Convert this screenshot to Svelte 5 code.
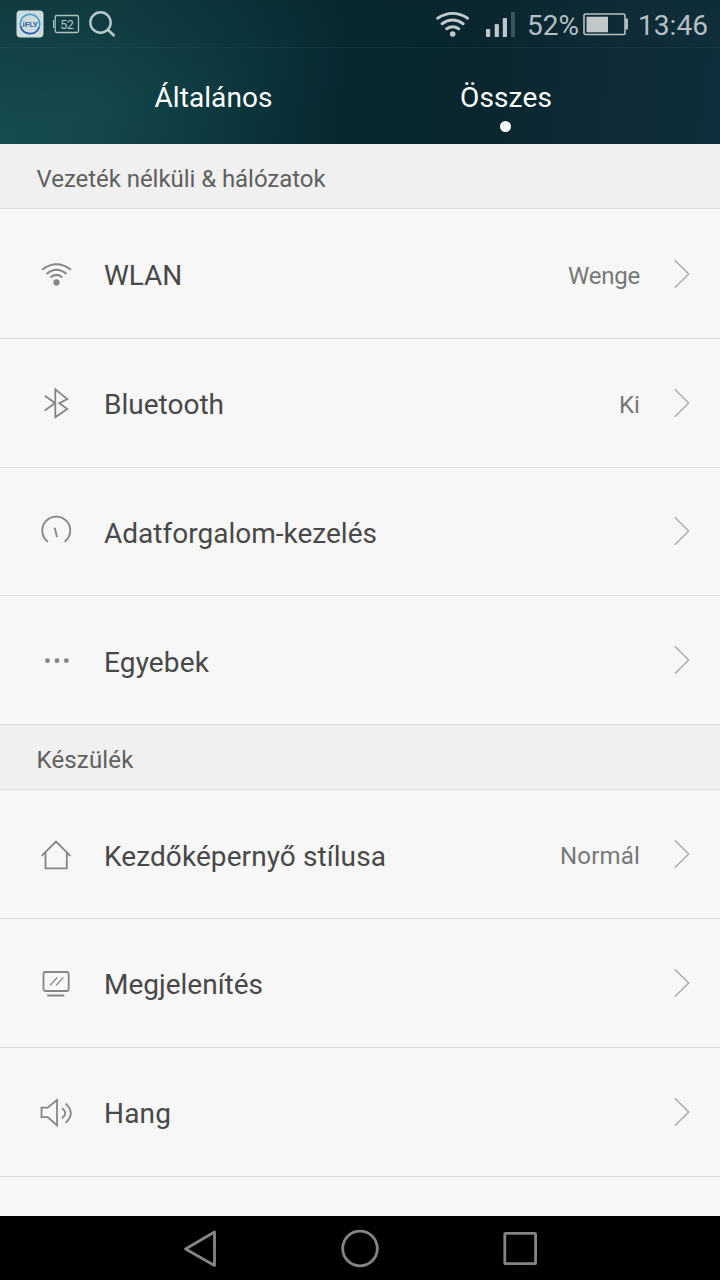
<script>
  const sections = [
    {
      title: 'Vezeték nélküli & hálózatok', width: 289,
      rows: [
        { icon: 'wifi', label: 'WLAN', width: 78, value: 'Wenge', valueWidth: 72 },
        { icon: 'bluetooth', label: 'Bluetooth', width: 120, value: 'Ki', valueWidth: 21 },
        { icon: 'gauge', label: 'Adatforgalom-kezelés', width: 273 },
        { icon: 'dots', label: 'Egyebek', width: 105 }
      ]
    },
    {
      title: 'Készülék', width: 97,
      rows: [
        { icon: 'home', label: 'Kezdőképernyő stílusa', width: 282, value: 'Normál', valueWidth: 80 },
        { icon: 'display', label: 'Megjelenítés', width: 159 },
        { icon: 'sound', label: 'Hang', width: 67 }
      ]
    }
  ];

  // Spreads the letters so that a label takes up the given width.
  function fit(node, width) {
    const spacing = (width - node.getBoundingClientRect().width) / node.textContent.length;
    node.style.letterSpacing = `${spacing}px`;
  }
</script>

<div class="screen">
  <header>
    <div class="status">
      <svg class="left" width="130" height="48" viewBox="0 0 130 48" fill="none">
        <rect x="16.5" y="10.5" width="27" height="27" rx="4" fill="#cfdcdf" />
        <circle cx="30" cy="24" r="9.8" stroke="#3c9fc8" stroke-width="1.5" />
        <path d="M20.5 26a9.8 9.8 0 0 0 18.6 1.5" stroke="#3157a9" stroke-width="1.5" />
        <text x="22.5" y="26.5" font-size="6.6" font-weight="700" textLength="15.5" lengthAdjust="spacingAndGlyphs" fill="#3b6aa5">iFLY</text>
        <rect x="55.2" y="15.5" width="23.3" height="17" rx="1.5" stroke="#aec2c4" stroke-width="1.3" />
        <path d="M53.5 20v8" stroke="#aec2c4" />
        <text x="60.3" y="29" font-size="12.5" textLength="13.5" fill="#b5c8ca">52</text>
        <circle cx="100.5" cy="22.5" r="10.2" stroke="#b8c9cb" stroke-width="2.4" />
        <path d="m107.5 29.5 7 6.5" stroke="#b8c9cb" stroke-width="2.6" />
      </svg>
      <svg class="right" width="290" height="48" viewBox="430 0 290 48" fill="none">
        <g stroke="#c1cacd" stroke-width="2.9" stroke-linecap="round">
          <path d="M437.6 18.2q15-9.6 30 0M442 23.7q10.6-7.3 21.2 0M446.7 28.8q6-4.3 12 0" />
        </g>
        <circle cx="452.7" cy="34" r="2.8" fill="#c1cacd" />
        <g fill="#bdc7ca">
          <rect x="486" y="29" width="4.2" height="8" rx=".8" />
          <rect x="494.7" y="24" width="4.2" height="13" rx=".8" />
          <rect x="502.8" y="18" width="4.2" height="19" rx=".8" />
          <rect x="511" y="12" width="4" height="25" rx=".8" opacity=".28" />
        </g>
        <text x="527" y="35" font-size="27.5" textLength="52" lengthAdjust="spacingAndGlyphs" fill="#b5bfc3">52%</text>
        <rect x="584" y="14" width="41" height="20.5" rx="1.5" stroke="#b9c3c6" stroke-width="1.6" />
        <rect x="586.5" y="16.7" width="21.5" height="15.6" fill="#c0c8ca" />
        <path d="M626.7 18.5v11" stroke="#b9c3c6" stroke-width="2.4" />
        <text x="638" y="35" font-size="27.5" textLength="70" lengthAdjust="spacingAndGlyphs" fill="#b5bfc3">13:46</text>
      </svg>
    </div>
    <nav>
      <div class="tab"><span use:fit={118}>Általános</span></div>
      <div class="tab second"><span use:fit={92}>Összes</span><i></i></div>
    </nav>
  </header>

  <main>
    {#each sections as section}
      <h2><span use:fit={section.width}>{section.title}</span></h2>
      {#each section.rows as row}
        <div class="row">
          <svg class="icon" width="40" height="40" viewBox="0 0 40 40">
            {#if row.icon === 'wifi'}
              <path d="M6 15.7q14.5-11 29 0M10.5 20q10-8.6 20 0M14.4 23.5q6-5.2 12 0" stroke-width="2" />
              <circle cx="20.5" cy="28.4" r="3.1" fill="#858585" stroke="none" />
            {:else if row.icon === 'bluetooth'}
              <path d="m8.8 12.8 10.2 7.2L8.8 27.5M19.3 34.3V6.3l12 9.7-8 4.1 8 5.9z" />
            {:else if row.icon === 'gauge'}
              <path d="M11.9 30.8A14 14 0 1 1 28.6 30.8M18.7 16.8l2.3 9.3" />
            {:else if row.icon === 'dots'}
              <g fill="#858585" stroke="none"><circle cx="11.5" cy="20.7" r="2.4" /><circle cx="21" cy="20.7" r="2.4" /><circle cx="30.4" cy="20.7" r="2.4" /></g>
            {:else if row.icon === 'home'}
              <path d="M5.7 21.9 20 7.6l14.3 14.3M9.5 18.5v15.8h21.3V18.5" />
            {:else if row.icon === 'display'}
              <rect x="7.5" y="9" width="25.2" height="19" rx="2" />
              <path d="M11.2 32.5h17" stroke-width="2" />
              <path d="m14 22.3 7.2-7.8M20 22.3l7.3-7.8" stroke-width="1.2" />
            {:else}
              <path d="M5.5 15.7h6.3L21 7.9v25.6l-9.2-8.3H5.5zM26 16.3q6.6 5 0 10M29.6 11.7q10.4 9.6 0 19.2" />
            {/if}
          </svg>
          <span class="label"><span use:fit={row.width}>{row.label}</span></span>
          {#if row.value}<span class="value"><span use:fit={row.valueWidth}>{row.value}</span></span>{/if}
          <svg class="chevron" width="18" height="30" viewBox="0 0 18 30"><path d="M1.8 1.2 15.7 15 1.8 28.8" /></svg>
        </div>
      {/each}
    {/each}
  </main>

  <footer>
    <svg width="720" height="64" viewBox="0 0 720 64" fill="none" stroke="#858585" stroke-width="2.8" stroke-linejoin="round">
      <path d="M185.5 33 214.5 16v33.5z" />
      <circle cx="360" cy="32.5" r="17.3" />
      <rect x="504.8" y="17.3" width="30.8" height="30.4" rx=".8" />
    </svg>
  </footer>
</div>

<style>
  :global(body) { margin: 0; overflow: hidden; }
  .screen { width: 720px; height: 1280px; display: flex; flex-direction: column; overflow: hidden; background: #f7f7f7; font-family: Roboto, sans-serif; }
  header { height: 144px; flex: none; background: linear-gradient(165deg, #00141950 0, #00141900 40%), linear-gradient(98deg, #164d50 0, #15484c 14%, #0d393f 31%, #08272f 49%, #09262e 65%, #0d2a35 80%, #102d3b 100%); }
  .status { height: 48px; box-sizing: border-box; display: flex; justify-content: space-between; border-bottom: 1px solid #ffffff0a; }
  .status svg { flex: none; }
  nav { height: 96px; display: flex; }
  .tab { width: 427px; display: flex; justify-content: center; position: relative; font-size: 28px; line-height: 100px; color: #fff; white-space: nowrap; }
  .second { width: 158px; }
  .tab i { position: absolute; width: 11px; height: 11px; border-radius: 50%; background: #fff; left: 73px; top: 73px; }
  main { flex: 1; min-height: 0; overflow: hidden; }
  h2 { box-sizing: border-box; height: 65px; margin: 0; padding-left: 36.5px; border-bottom: 1px solid #dcdcdc; background: #f0f0f0; color: #606060; font-size: 24px; font-weight: 400; line-height: 70px; white-space: nowrap; }
  h2:first-child { margin-bottom: 1px; }
  .row { height: 128.8px; box-sizing: border-box; display: flex; align-items: center; padding: 0 29px 0 36px; border-bottom: 1px solid #dadada; white-space: nowrap; }
  .icon { fill: none; stroke: #858585; stroke-width: 1.8; flex: none; }
  .label { margin: 4px 0 0 28px; flex: 1; font-size: 28px; color: #484848; }
  .value { margin-top: 4px; font-size: 24px; color: #777; }
  .chevron { fill: none; stroke: #aaa; stroke-width: 1.4; margin-left: 33px; flex: none; }
  footer { height: 64px; flex: none; background: #000; }
  footer svg { display: block; }
</style>
